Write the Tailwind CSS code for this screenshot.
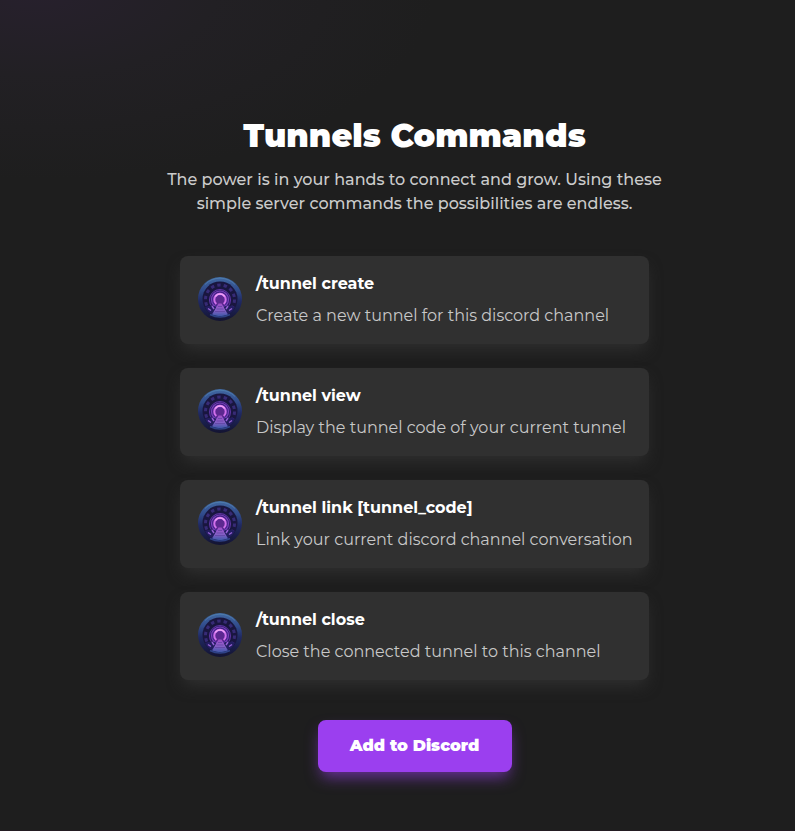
<!DOCTYPE html>
<html lang="en">
<head>
<meta charset="utf-8">
<title>Tunnels Commands</title>
<script src="https://cdn.jsdelivr.net/npm/@tailwindcss/browser@4"></script>
</head>
<body class="h-[831px] overflow-hidden bg-[#1e1e1e] font-['Montserrat',Inter,sans-serif] text-white">
<svg class="absolute size-0">
  <defs>
    <linearGradient id="rim" x1="0" y1="0" x2="0" y2="1"><stop offset="0" stop-color="#426aa3"/><stop offset=".3" stop-color="#304b8b"/><stop offset=".55" stop-color="#202963"/><stop offset="1" stop-color="#131331"/></linearGradient>
    <radialGradient id="hall" cx=".5" cy=".5" r=".5"><stop offset="0" stop-color="#9a48d4"/><stop offset=".6" stop-color="#4a2490"/><stop offset="1" stop-color="#1b1648"/></radialGradient>
    <linearGradient id="path" x1="0" y1="0" x2="0" y2="1"><stop offset="0" stop-color="#a04fc8"/><stop offset=".5" stop-color="#8a60c8"/><stop offset="1" stop-color="#3d58a8"/></linearGradient>
    <symbol id="portal" viewBox="0 0 44 44">
      <circle cx="22" cy="22" r="22" fill="url(#rim)"/>
      <circle cx="22" cy="22" r="17.500" fill="#19163f"/>
      <circle cx="22" cy="22.500" r="14.500" fill="none" stroke="#372b76" stroke-width="3" stroke-dasharray="3.400 3.110"/>
      <circle cx="22" cy="23" r="11.500" fill="url(#hall)"/>
      <circle cx="22" cy="23" r="10.500" fill="none" stroke="#5e35a0"/>
      <circle cx="22" cy="22.500" r="8.500" fill="none" stroke="#7a3fbd" stroke-width="1.200"/>
      <path d="M17 28v-5.500a5.200 5.200 0 0 1 10 0v5.500z" fill="#5c2890"/>
      <path d="M18.300 27q-2.300-2-2-4.500a5.700 5.700 0 0 1 11.400 0q.3 2.500-2 4.500" fill="none" stroke="#d070ea" stroke-width="2"/>
      <path d="M17.300 19.500a5.700 5.700 0 0 1 9.400 0" fill="none" stroke="#efa0f6" stroke-width="1.500"/>
      <path d="M7 30q5-2 11-.5l-1 9q-7-2-10-8.500zM37 30q-5-2-11-.5l1 9q7-2 10-8.500z" fill="#231d60"/>
      <path d="M10 31.500l3 2M14 29l2 3M34 31.500l-3 2M30 29l-2 3" stroke="#9460d4" stroke-width="1.500"/>
      <path d="M20.500 26.500h3l6.500 11q-8 3.500-16 0z" fill="url(#path)"/>
      <path d="M20 29.500h4M18.500 32h7M17 34.500h10" stroke="#5d419f" stroke-width=".7"/>
      <path d="M12 37.500q10 5 20 0" fill="none" stroke="#2e4287" stroke-width="1.500"/>
      <path d="M7 7.500a21 21 0 0 1 30 0" fill="none" stroke="#5a90b8" stroke-opacity=".5"/>
    </symbol>
  </defs>
</svg>
<main class="flex h-full flex-col items-center border-b border-[#231c22] bg-[radial-gradient(ellipse_400px_190px_at_35px_-10px,#27202d,#222024_45%,#1e1e1e)] pt-[116px] pl-[34px]">
  <h1 class="h-10 text-[32px] leading-10 font-black whitespace-nowrap">Tunnels Commands</h1>
  <p class="mt-3 text-center text-[16px] leading-6 font-medium whitespace-nowrap text-[#cbcbcb]">The power is in your hands to connect and grow. Using these<br>simple server commands the possibilities are endless.</p>
  <div class="mt-10 flex w-[469px] flex-col gap-6">
    <section class="flex h-[88px] rounded-lg bg-[#303030] pt-4 pl-[18px] shadow-[0_8px_15px_-3px_#303030]">
      <svg class="mt-[5px] mr-[14px] size-11 shrink-0"><use href="#portal"/></svg>
      <div class="whitespace-nowrap"><h2 class="text-[16px] leading-6 font-bold">/tunnel create</h2><p class="mt-2 text-[16px] leading-6 text-[#c8c8c8]">Create a new tunnel for this discord channel</p></div>
    </section>
    <section class="flex h-[88px] rounded-lg bg-[#303030] pt-4 pl-[18px] shadow-[0_8px_15px_-3px_#303030]">
      <svg class="mt-[5px] mr-[14px] size-11 shrink-0"><use href="#portal"/></svg>
      <div class="whitespace-nowrap"><h2 class="text-[16px] leading-6 font-bold">/tunnel view</h2><p class="mt-2 text-[16px] leading-6 text-[#c8c8c8]">Display the tunnel code of your current tunnel</p></div>
    </section>
    <section class="flex h-[88px] rounded-lg bg-[#303030] pt-4 pl-[18px] shadow-[0_8px_15px_-3px_#303030]">
      <svg class="mt-[5px] mr-[14px] size-11 shrink-0"><use href="#portal"/></svg>
      <div class="whitespace-nowrap"><h2 class="text-[16px] leading-6 font-bold">/tunnel link [tunnel_code]</h2><p class="mt-2 text-[16px] leading-6 text-[#c8c8c8]">Link your current discord channel conversation</p></div>
    </section>
    <section class="flex h-[88px] rounded-lg bg-[#303030] pt-4 pl-[18px] shadow-[0_8px_15px_-3px_#303030]">
      <svg class="mt-[5px] mr-[14px] size-11 shrink-0"><use href="#portal"/></svg>
      <div class="whitespace-nowrap"><h2 class="text-[16px] leading-6 font-bold">/tunnel close</h2><p class="mt-2 text-[16px] leading-6 text-[#c8c8c8]">Close the connected tunnel to this channel</p></div>
    </section>
  </div>
  <button class="mt-10 flex h-[52px] w-[194px] items-center justify-center rounded-lg bg-[#9b3fef] text-[16px] font-black whitespace-nowrap shadow-[0_8px_15px_-3px_#9b3fef99]">Add to Discord</button>
</main>
</body>
</html>
